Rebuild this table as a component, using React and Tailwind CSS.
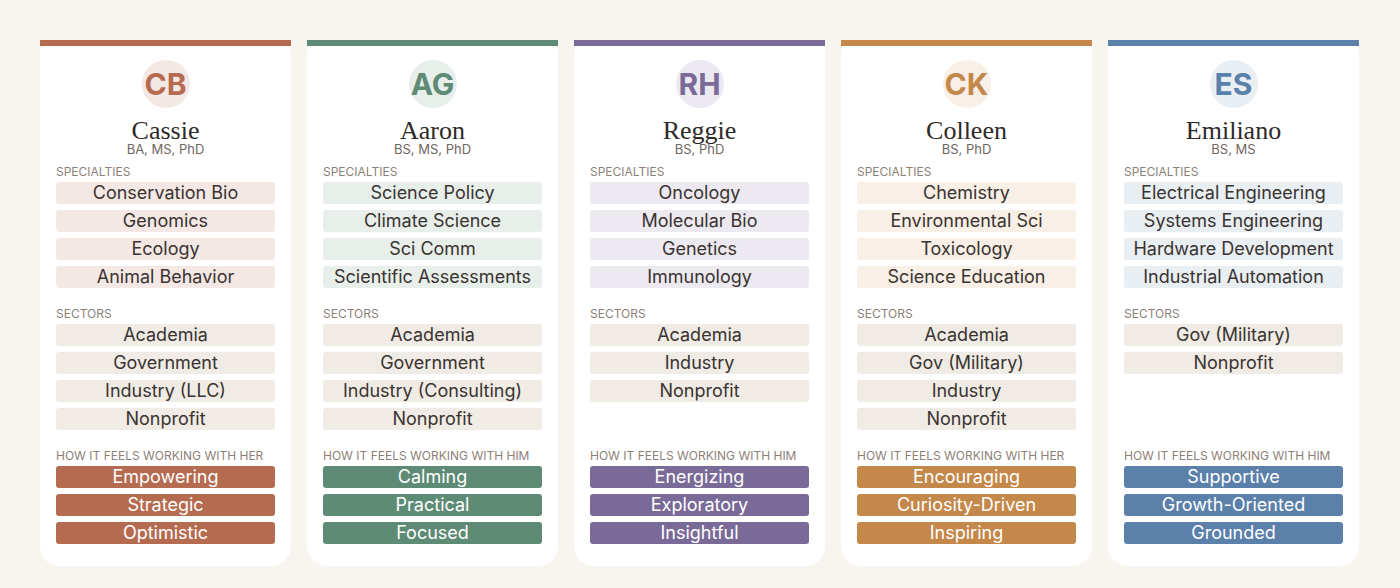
import React from 'react';

const people = [
    {
        initials: 'CB',
        name: 'Cassie',
        degrees: 'BA, MS, PhD',
        accent: 'bg-[#b56b4f]',
        text: 'text-[#b56b4f]',
        tint: 'bg-[#f4e8e4]',
        pronoun: 'HER',
        specialties: ['Conservation Bio', 'Genomics', 'Ecology', 'Animal Behavior'],
        sectors: ['Academia', 'Government', 'Industry (LLC)', 'Nonprofit'],
        feels: ['Empowering', 'Strategic', 'Optimistic'],
    },
    {
        initials: 'AG',
        name: 'Aaron',
        degrees: 'BS, MS, PhD',
        accent: 'bg-[#5e8b76]',
        text: 'text-[#5e8b76]',
        tint: 'bg-[#e8efeb]',
        pronoun: 'HIM',
        specialties: ['Science Policy', 'Climate Science', 'Sci Comm', 'Scientific Assessments'],
        sectors: ['Academia', 'Government', 'Industry (Consulting)', 'Nonprofit'],
        feels: ['Calming', 'Practical', 'Focused'],
    },
    {
        initials: 'RH',
        name: 'Reggie',
        degrees: 'BS, PhD',
        accent: 'bg-[#7a6a98]',
        text: 'text-[#7a6a98]',
        tint: 'bg-[#ece9f1]',
        pronoun: 'HIM',
        specialties: ['Oncology', 'Molecular Bio', 'Genetics', 'Immunology'],
        sectors: ['Academia', 'Industry', 'Nonprofit'],
        feels: ['Energizing', 'Exploratory', 'Insightful'],
    },
    {
        initials: 'CK',
        name: 'Colleen',
        degrees: 'BS, PhD',
        accent: 'bg-[#c4884b]',
        text: 'text-[#c4884b]',
        tint: 'bg-[#f8efe6]',
        pronoun: 'HER',
        specialties: ['Chemistry', 'Environmental Sci', 'Toxicology', 'Science Education'],
        sectors: ['Academia', 'Gov (Military)', 'Industry', 'Nonprofit'],
        feels: ['Encouraging', 'Curiosity-Driven', 'Inspiring'],
    },
    {
        initials: 'ES',
        name: 'Emiliano',
        degrees: 'BS, MS',
        accent: 'bg-[#5b80aa]',
        text: 'text-[#5b80aa]',
        tint: 'bg-[#e9eef3]',
        pronoun: 'HIM',
        specialties: ['Electrical Engineering', 'Systems Engineering', 'Hardware Development', 'Industrial Automation'],
        sectors: ['Gov (Military)', 'Nonprofit'],
        feels: ['Supportive', 'Growth-Oriented', 'Grounded'],
    },
];

function Section({ label, items, pillClass, className = '' }) {
    return (
        <div className={className}>
            <div className="text-[12px] leading-[14px] text-[#8c7f77] uppercase">{label}</div>
            <div className="mt-[3px] flex flex-col gap-[6px]">
                {items.map(item => (
                    <div
                        key={item}
                        className={`h-[22px] rounded-[3px] flex items-center justify-center text-[18px] leading-none whitespace-nowrap ${pillClass}`}
                    >
                        {item}
                    </div>
                ))}
            </div>
        </div>
    );
}

function PersonCard({ person }) {
    return (
        <div className="w-[251px] flex flex-col">
            <div className={`h-[6px] ${person.accent}`} />
            <div className="flex-1 flex flex-col bg-white rounded-t-[5px] rounded-b-[20px] px-4 pt-[14px] pb-[22px]">
                {/* Avatar */}
                <div className={`mx-auto w-12 h-12 rounded-full flex items-center justify-center ${person.tint}`}>
                    <span className={`text-[30px] font-bold leading-none ${person.text}`}>{person.initials}</span>
                </div>
                <div className="mt-[12px] text-center text-[26px] leading-[22px] text-[#2e2a27] font-['Liberation_Serif',serif]">
                    {person.name}
                </div>
                <div className="text-center text-[13px] leading-[14px] text-[#6f6660]">{person.degrees}</div>

                <Section
                    className="mt-[9px]"
                    label="Specialties"
                    items={person.specialties}
                    pillClass={`${person.tint} text-[#3a3330]`}
                />
                <Section
                    className="mt-[19px]"
                    label="Sectors"
                    items={person.sectors}
                    pillClass="bg-[#f0ebe5] text-[#3a3330]"
                />
                <div className="mt-auto pt-[19px]">
                    <Section
                        label={`How it feels working with ${person.pronoun}`}
                        items={person.feels}
                        pillClass={`${person.accent} text-white`}
                    />
                </div>
            </div>
        </div>
    );
}

export default function App() {
    return (
        <div className="min-h-screen bg-[#f8f5f0] pt-10 pl-10 pb-[22px] font-['Inter','Liberation_Sans',sans-serif]">
            <div className="flex gap-4 items-stretch">
                {people.map(p => (
                    <PersonCard key={p.name} person={p} />
                ))}
            </div>
        </div>
    );
}
